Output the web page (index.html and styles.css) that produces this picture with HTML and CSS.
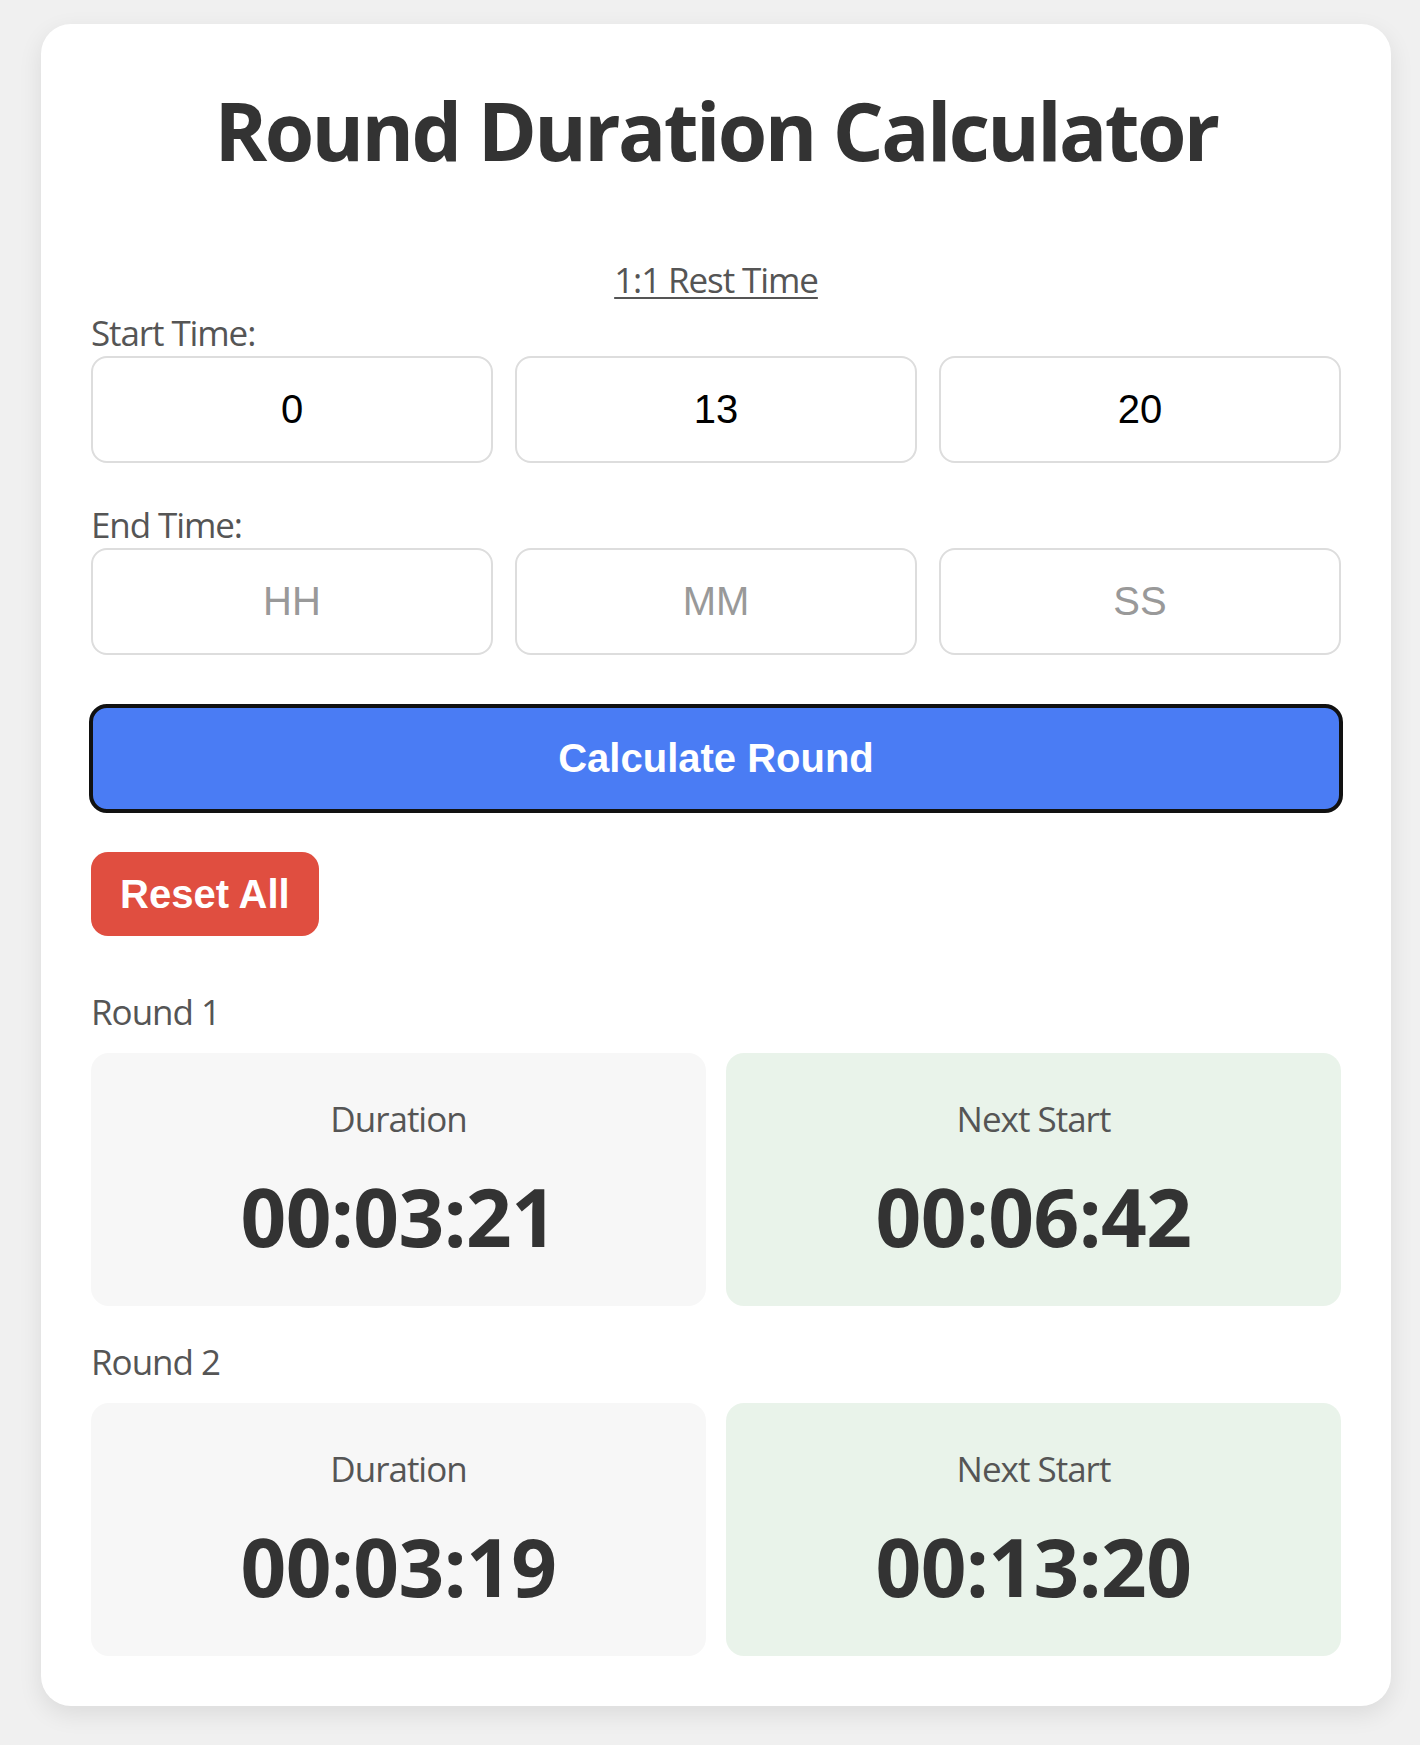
FILE: index.html
```html
<!DOCTYPE html>
<html lang="en">
<head>
<meta charset="utf-8">
<title>Round Duration Calculator</title>
<link rel="stylesheet" href="styles.css">
</head>
<body>
<main class="card">
  <h1 class="title">Round Duration Calculator</h1>
  <div class="mode"><a class="mode-link" href="#">1:1 Rest Time</a></div>

  <label class="field-label">Start Time:</label>
  <div class="time-row">
    <input class="time-input" type="text" value="0" placeholder="HH">
    <input class="time-input" type="text" value="13" placeholder="MM">
    <input class="time-input" type="text" value="20" placeholder="SS">
  </div>

  <label class="field-label field-label-end">End Time:</label>
  <div class="time-row">
    <input class="time-input" type="text" placeholder="HH">
    <input class="time-input" type="text" placeholder="MM">
    <input class="time-input" type="text" placeholder="SS">
  </div>

  <button class="btn-calc" type="button">Calculate Round</button>
  <button class="btn-reset" type="button">Reset All</button>

  <section class="round round-first">
    <div class="round-title">Round 1</div>
    <div class="result-grid">
      <div class="result-box result-duration">
        <div class="result-label">Duration</div>
        <div class="result-value">00:03:21</div>
      </div>
      <div class="result-box result-next">
        <div class="result-label">Next Start</div>
        <div class="result-value">00:06:42</div>
      </div>
    </div>
  </section>

  <section class="round">
    <div class="round-title">Round 2</div>
    <div class="result-grid">
      <div class="result-box result-duration">
        <div class="result-label">Duration</div>
        <div class="result-value">00:03:19</div>
      </div>
      <div class="result-box result-next">
        <div class="result-label">Next Start</div>
        <div class="result-value">00:13:20</div>
      </div>
    </div>
  </section>
</main>
</body>
</html>
```

FILE: styles.css
```css
* { box-sizing: border-box; }

html, body {
  margin: 0;
  background: #f0f0f0;
}

body {
  padding: 24px 29px 40px 41px;
  font-family: "Open Sans", "Noto Sans", sans-serif;
  color: #555;
}

.card {
  background: #fff;
  border-radius: 30px;
  padding: 50px;
  box-shadow: 0 8px 24px rgba(0, 0, 0, 0.09);
}

.title {
  margin: 8px 0 0;
  font-size: 80px;
  line-height: 96px;
  font-weight: 700;
  color: #333;
  text-align: center;
  letter-spacing: -2.6px;
}

.mode {
  margin-top: 78px;
  text-align: center;
  font-size: 35px;
  line-height: 47px;
}

.mode-link {
  color: #555;
  text-decoration: underline;
  text-underline-offset: 4px;
  text-decoration-thickness: 2px;
  letter-spacing: -1.1px;
}

.field-label {
  display: block;
  margin-top: 6px;
  font-size: 35px;
  line-height: 47px;
  color: #555;
  letter-spacing: -1.1px;
}

.field-label-end {
  margin-top: 38px;
}

.time-row {
  display: grid;
  grid-template-columns: repeat(3, 1fr);
  gap: 22px;
}

.time-input {
  width: 100%;
  height: 107px;
  border: 2px solid #ddd;
  border-radius: 16px;
  background: #fff;
  font-family: "Liberation Sans", Arial, sans-serif;
  font-size: 40px;
  color: #000;
  text-align: center;
  padding: 0 10px;
  outline: none;
}

.time-input::placeholder {
  color: #999;
}

.btn-calc {
  display: block;
  width: 100%;
  height: 105px;
  margin-top: 51px;
  background: #4a7cf4;
  color: #fff;
  border: none;
  border-radius: 16px;
  outline: 4px solid #111;
  outline-offset: -2px;
  font-family: "Liberation Sans", Arial, sans-serif;
  font-weight: 700;
  font-size: 40px;
  cursor: pointer;
}

.btn-reset {
  display: block;
  margin-top: 41px;
  height: 84px;
  padding: 0 29px;
  background: #e04e40;
  color: #fff;
  border: none;
  border-radius: 17px;
  font-family: "Liberation Sans", Arial, sans-serif;
  font-weight: 700;
  font-size: 40px;
  cursor: pointer;
}

.round {
  margin-top: 32px;
}

.round-first {
  margin-top: 52px;
}

.round-title {
  font-size: 35px;
  line-height: 47px;
  color: #555;
  letter-spacing: -1px;
}

.result-grid {
  margin-top: 18px;
  display: grid;
  grid-template-columns: 1fr 1fr;
  gap: 20px;
}

.result-box {
  border-radius: 18px;
  padding: 42px 20px;
  text-align: center;
}

.result-duration { background: #f7f7f7; }
.result-next { background: #e9f3ea; }

.result-label {
  font-size: 35px;
  line-height: 47px;
  color: #555;
  letter-spacing: -1px;
}

.result-value {
  margin-top: 26px;
  font-size: 80px;
  line-height: 96px;
  font-weight: 700;
  color: #333;
  letter-spacing: -0.5px;
}
```
